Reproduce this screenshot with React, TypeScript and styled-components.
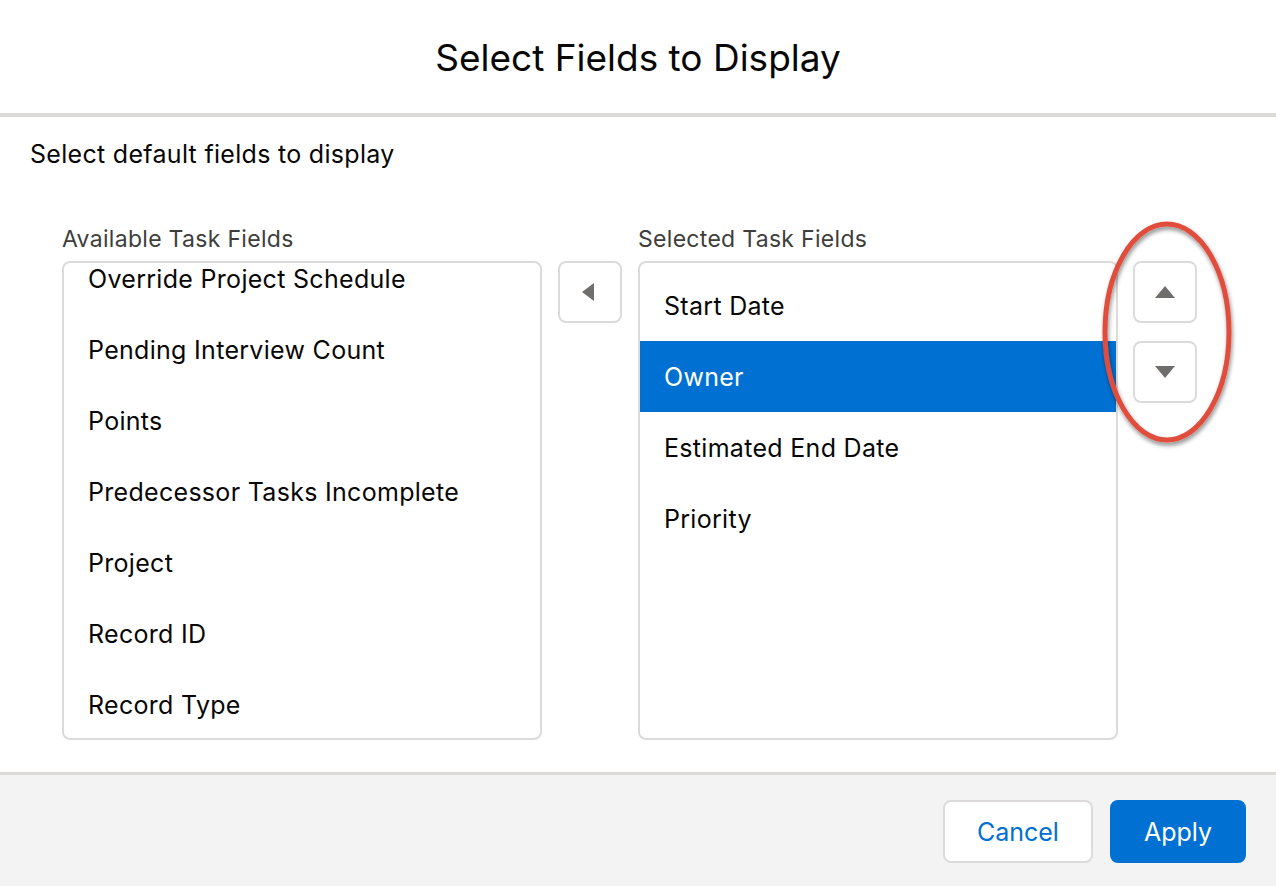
import styled, { createGlobalStyle } from "styled-components"

const GlobalStyle = createGlobalStyle`
  html, body {
    margin: 0;
    padding: 0;
    background: #fff;
  }
  body {
    font-family: Inter, "Liberation Sans", Arial, sans-serif;
    color: #080707;
  }
`

const available = [
    "Override Project Schedule",
    "Pending Interview Count",
    "Points",
    "Predecessor Tasks Incomplete",
    "Project",
    "Record ID",
    "Record Type",
]

const selected = ["Start Date", "Owner", "Estimated End Date", "Priority"]

function Triangle(props: { dir: "left" | "up" | "down" }) {
    const pts = {
        left: "15,2 15,20 3,11",
        up: "1,17 21,17 11,5",
        down: "1,5 21,5 11,17",
    }[props.dir]
    return (
        <svg width="22" height="22" viewBox="0 0 22 22">
            <polygon points={pts} fill="#706e6b" />
        </svg>
    )
}

export default function App() {
    return (
        <Modal>
            <GlobalStyle />
            <Header>
                <Title>Select Fields to Display</Title>
            </Header>
            <Body>
                <Intro>Select default fields to display</Intro>
                <Dueling>
                    <Column>
                        <ListLabel>Available Task Fields</ListLabel>
                        <ListBox>
                            <ListInner $offset={-20}>
                                {available.map((a) => <Option key={a}>{a}</Option>)}
                            </ListInner>
                        </ListBox>
                    </Column>
                    <MoveButtons>
                        <IconButton><Triangle dir="left" /></IconButton>
                    </MoveButtons>
                    <Column>
                        <ListLabel>Selected Task Fields</ListLabel>
                        <ListBox>
                            <ListInner $offset={7}>
                                {selected.map((s) => <Option key={s} $active={s === "Owner"}>{s}</Option>)}
                            </ListInner>
                        </ListBox>
                    </Column>
                    <OrderButtons>
                        <IconButton><Triangle dir="up" /></IconButton>
                        <IconButton><Triangle dir="down" /></IconButton>
                        <Highlight width="140" height="236" viewBox="0 0 140 236">
                            <defs>
                                <filter id="sh" x="-20%" y="-20%" width="140%" height="140%">
                                    <feDropShadow dx="1" dy="3" stdDeviation="2" floodColor="#000" floodOpacity="0.45" />
                                </filter>
                            </defs>
                            <ellipse cx="66" cy="114" rx="62" ry="108" fill="none" stroke="#e04e3c" strokeWidth="5" filter="url(#sh)" />
                        </Highlight>
                    </OrderButtons>
                </Dueling>
            </Body>
            <Footer>
                <Button>Cancel</Button>
                <Button $brand>Apply</Button>
            </Footer>
        </Modal>
    )
}

const Modal = styled.div`
    width: 1276px;
    height: 886px;
    display: flex;
    flex-direction: column;
    background: #fff;
    overflow: hidden;
`

const Header = styled.div`
    height: 113px;
    border-bottom: 4px solid #dddbda;
    display: flex;
    align-items: center;
    justify-content: center;
`

const Title = styled.h2`
    margin: 0;
    font-size: 37px;
    font-weight: 400;
    color: #080707;
    padding-top: 2px;
`

const Body = styled.div`
    flex: 1;
    padding: 24px 30px 0 30px;
`

const Intro = styled.div`
    font-size: 25px;
    letter-spacing: 0.3px;
    line-height: 26px;
`

const Dueling = styled.div`
    display: flex;
    align-items: flex-start;
    margin-top: 59px;
    padding-left: 32px;
`

const Column = styled.div`
    display: flex;
    flex-direction: column;
`

const ListLabel = styled.div`
    font-size: 23px;
    letter-spacing: 0.3px;
    line-height: 26px;
    color: #3e3e3c;
    margin-bottom: 9px;
`

const ListBox = styled.div`
    width: 476px;
    height: 475px;
    border: 2px solid #dddbda;
    border-radius: 8px;
    overflow: hidden;
`

const ListInner = styled.div<{ $offset: number }>`
    margin-top: ${(p) => p.$offset}px;
`

const Option = styled.div<{ $active?: boolean }>`
    height: 71px;
    display: flex;
    align-items: center;
    padding-left: 24px;
    font-size: 25px;
    letter-spacing: 0.3px;
    background: ${(p) => (p.$active ? "#0070d2" : "transparent")};
    color: ${(p) => (p.$active ? "#fff" : "#080707")};
`

const MoveButtons = styled.div`
    margin: 35px 16px 0 16px;
`

const OrderButtons = styled.div`
    position: relative;
    display: flex;
    flex-direction: column;
    gap: 18px;
    margin: 35px 0 0 15px;
`

const IconButton = styled.button`
    width: 64px;
    height: 62px;
    padding: 0;
    background: #fff;
    border: 2px solid #dddbda;
    border-radius: 8px;
    display: flex;
    align-items: center;
    justify-content: center;
`

const Highlight = styled.svg`
    position: absolute;
    left: -32px;
    top: -43px;
    pointer-events: none;
`

const Footer = styled.div`
    height: 114px;
    box-sizing: border-box;
    border-top: 3px solid #dddbda;
    background: #f3f3f3;
    display: flex;
    justify-content: flex-end;
    align-items: flex-start;
    gap: 17px;
    padding: 25px 30px 0 0;
`

const Button = styled.button<{ $brand?: boolean }>`
    height: 63px;
    padding: 0 32px;
    border-radius: 8px;
    font-family: Inter, "Liberation Sans", Arial, sans-serif;
    font-size: 25px;
    border: 2px solid ${(p) => (p.$brand ? "#0070d2" : "#dddbda")};
    background: ${(p) => (p.$brand ? "#0070d2" : "#fff")};
    color: ${(p) => (p.$brand ? "#fff" : "#0070d2")};
`
